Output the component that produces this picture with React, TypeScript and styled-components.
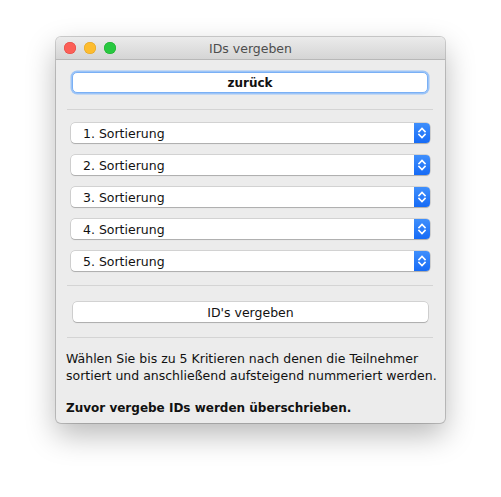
import React from "react";
import styled, { createGlobalStyle } from "styled-components";

const Global = createGlobalStyle`
  html, body { margin: 0; padding: 0; background: #ffffff; }
  body { font-family: "DejaVu Sans", "Liberation Sans", sans-serif; }
  * { box-sizing: border-box; }
`;

const Page = styled.div`
  width: 501px;
  height: 497px;
  padding: 37px 0 0 56px;
`;

const Window = styled.div`
  width: 389px;
  height: 386px;
  background: #ececec;
  border-radius: 5px;
  box-shadow: 0 0 0 1px rgba(0, 0, 0, 0.18), 0 12px 30px rgba(0, 0, 0, 0.28);
  overflow: hidden;
  display: flex;
  flex-direction: column;
`;

const TitleBar = styled.div`
  height: 23px;
  flex: none;
  position: relative;
  display: flex;
  align-items: center;
  justify-content: center;
  background: linear-gradient(#ebebeb, #d5d5d5);
  border-bottom: 1px solid #b8b8b8;
`;

const Lights = styled.div`
  position: absolute;
  left: 8px;
  top: 5px;
  display: flex;
  gap: 8px;
`;

const Light = styled.span<{ $c: string; $b: string }>`
  width: 12px;
  height: 12px;
  border-radius: 50%;
  background: ${(p) => p.$c};
  box-shadow: inset 0 0 0 0.5px ${(p) => p.$b};
`;

const Title = styled.div`
  font-size: 12.5px;
  color: #4d4d4d;
`;

const Content = styled.div`
  display: flex;
  flex-direction: column;
  padding: 12px 12px 0 11px;
`;

const FocusButton = styled.button`
  margin: 0 5px 0 5px;
  height: 21px;
  border-radius: 5px;
  border: 1px solid #7ab0f5;
  box-shadow: 0 0 0 1.5px #9cc4f7;
  background: #ffffff;
  font-family: inherit;
  font-weight: bold;
  font-size: 12px;
  color: #111;
  padding: 0;
`;

const Separator = styled.div<{ $top: number; $bottom: number }>`
  height: 1px;
  background: #d4d4d4;
  margin-top: ${(p) => p.$top}px;
  margin-bottom: ${(p) => p.$bottom}px;
`;

const PopupList = styled.div`
  display: flex;
  flex-direction: column;
  gap: 12px;
  padding: 0 3px 0 4px;
`;

const Popup = styled.div`
  height: 20px;
  display: flex;
  background: #ffffff;
  border-radius: 4px;
  box-shadow: 0 0 0 0.5px rgba(0, 0, 0, 0.22), 0 1px 1px rgba(0, 0, 0, 0.18);
`;

const PopupLabel = styled.div`
  flex: 1;
  font-size: 12.5px;
  color: #111;
  padding-left: 12px;
  display: flex;
  align-items: center;
`;

const Stepper = styled.div`
  width: 16px;
  border-radius: 0 4px 4px 0;
  background: linear-gradient(#3f8ffc, #166bf6);
  display: flex;
  align-items: center;
  justify-content: center;
`;

const PlainButton = styled.button`
  margin: 0 5px 0 6px;
  height: 20px;
  border-radius: 4px;
  border: none;
  box-shadow: 0 0 0 0.5px rgba(0, 0, 0, 0.22), 0 1px 1px rgba(0, 0, 0, 0.18);
  background: #ffffff;
  font-family: inherit;
  font-size: 12.5px;
  color: #111;
  padding: 0;
`;

const Text = styled.p<{ $bold?: boolean }>`
  margin: 0 0 0 -1px;
  font-size: ${(p) => (p.$bold ? "12px" : "12.5px")};
  line-height: 17px;
  color: #111;
  font-weight: ${(p) => (p.$bold ? "bold" : "normal")};
  white-space: nowrap;
`;

const TextBlock = styled.div`
  display: flex;
  flex-direction: column;
  gap: 16px;
  padding-top: 12px;
`;

const Chevrons = () => (
  <svg width="10" height="14" viewBox="0 0 10 14" fill="none">
    <path d="M2 5.5 L5 2.5 L8 5.5" stroke="#fff" strokeWidth="1.6" strokeLinecap="square" />
    <path d="M2 8.5 L5 11.5 L8 8.5" stroke="#fff" strokeWidth="1.6" strokeLinecap="square" />
  </svg>
);

const sorts = [1, 2, 3, 4, 5];

export default function App() {
  return (
    <>
      <Global />
      <Page>
        <Window>
          <TitleBar>
            <Lights>
              <Light $c="#fc5f57" $b="#e0443e" />
              <Light $c="#fdbc2e" $b="#dea123" />
              <Light $c="#28c840" $b="#1aab29" />
            </Lights>
            <Title>IDs vergeben</Title>
          </TitleBar>
          <Content>
            <FocusButton>zurück</FocusButton>
            <Separator $top={16} $bottom={13} />
            <PopupList>
              {sorts.map((n) => (
                <Popup key={n}>
                  <PopupLabel>{n}. Sortierung</PopupLabel>
                  <Stepper>
                    <Chevrons />
                  </Stepper>
                </Popup>
              ))}
            </PopupList>
            <Separator $top={14} $bottom={16} />
            <PlainButton>ID's vergeben</PlainButton>
            <Separator $top={15} $bottom={0} />
            <TextBlock>
              <Text>
                Wählen Sie bis zu 5 Kritieren nach denen die Teilnehmer
                <br />
                sortiert und anschließend aufsteigend nummeriert werden.
              </Text>
              <Text $bold>Zuvor vergebe IDs werden überschrieben.</Text>
            </TextBlock>
          </Content>
        </Window>
      </Page>
    </>
  );
}
